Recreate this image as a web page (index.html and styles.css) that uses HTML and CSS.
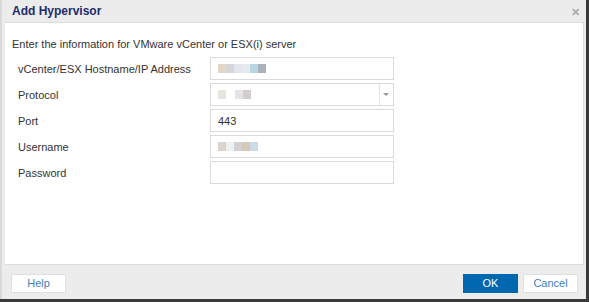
FILE: index.html
```html
<!DOCTYPE html>
<html lang="en">
<head>
    <meta charset="UTF-8">
    <meta name="viewport" content="width=device-width, initial-scale=1.0">
    <link rel="stylesheet" href="styles.css">
</head>
<body>
<div class="dialog">
    <div class="titleBar">
        <h3>Add Hypervisor</h3>
        <span class="close">&#x2715;</span>
    </div>
    <div class="content">
        <p class="intro">Enter the information for VMware vCenter or ESX(i) server</p>
        <div class="form">
            <div class="row">
                <label>vCenter/ESX Hostname/IP Address</label>
                <div class="field">
                    <span class="blur" style="background:#e3d6c6"></span><span class="blur" style="background:#d6d6d8"></span><span class="blur" style="background:#e2e6ec"></span><span class="blur" style="background:#e6eaef"></span><span class="blur" style="background:#b9d5e4"></span><span class="blur" style="background:#acb2b9"></span>
                </div>
            </div>
            <div class="row">
                <label>Protocol</label>
                <div class="field select">
                    <span class="blur" style="background:#e8e5df"></span><span class="gap"></span><span class="blur" style="background:#e4e4e8"></span><span class="blur" style="background:#d2cece"></span>
                    <span class="arrow"></span>
                </div>
            </div>
            <div class="row">
                <label>Port</label>
                <div class="field">443</div>
            </div>
            <div class="row">
                <label>Username</label>
                <div class="field">
                    <span class="blur" style="background:#ddd3ca"></span><span class="blur" style="background:#eff0f2"></span><span class="blur" style="background:#d1d1d3"></span><span class="blur" style="background:#d4c8bb"></span><span class="blur" style="background:#cddbe6"></span>
                </div>
            </div>
            <div class="row">
                <label>Password</label>
                <div class="field"></div>
            </div>
        </div>
    </div>
    <div class="footer">
        <button class="btn">Help</button>
        <div class="actions">
            <button class="btn primary">OK</button>
            <button class="btn">Cancel</button>
        </div>
    </div>
</div>
</body>
</html>
```

FILE: styles.css
```css
body {
	margin: 0;
	background-color: #3a3a3a;
	font-family: "Liberation Sans", Arial, sans-serif;
}

.dialog {
	width: 586px;
	height: 299px;
	background-color: #ececec;
	border-left: 2px solid #d9d9d9;
	box-sizing: border-box;
	display: flex;
	flex-direction: column;
}

.titleBar {
	height: 22px;
	display: flex;
	align-items: center;
	justify-content: space-between;
	padding: 0 6px 0 10px;
}

.titleBar h3 {
	margin: 0;
	font-size: 12px;
	font-weight: bold;
	color: #1d2d6b;
}

.close {
	font-size: 11px;
	font-weight: bold;
	color: #a9a9a9;
	margin-top: 3px;
}

.content {
	height: 243px;
	margin: 0 2px 0 3px;
	background-color: #fff;
	border: 1px solid #dcdce4;
	border-left: none;
	box-sizing: border-box;
	padding: 15px 0 0 7px;
}

.intro {
	margin: 0 0 7px;
	font-size: 11px;
	color: #333;
}

.form {
	display: flex;
	flex-direction: column;
	gap: 3px;
}

.row {
	display: flex;
	align-items: center;
	height: 23px;
}

.row label {
	width: 192px;
	padding-left: 6px;
	font-size: 11px;
	color: #333;
}

.field {
	width: 184px;
	height: 23px;
	border: 1px solid #dadada;
	box-sizing: border-box;
	display: flex;
	align-items: center;
	padding-left: 7px;
	font-size: 11px;
	color: #333;
	position: relative;
}

.blur {
	display: inline-block;
	width: 8px;
	height: 9px;
}

.gap {
	display: inline-block;
	width: 9px;
}

.select .arrow {
	position: absolute;
	right: 0;
	top: 0;
	bottom: 0;
	width: 13px;
	border-left: 1px solid #e2e2e2;
}

.select .arrow::after {
	content: "";
	position: absolute;
	left: 3px;
	top: 9px;
	border-left: 3px solid transparent;
	border-right: 3px solid transparent;
	border-top: 3px solid #999;
}

.footer {
	flex: 1;
	display: flex;
	align-items: center;
	justify-content: space-between;
	padding: 0 8px 0 9px;
}

.actions {
	display: flex;
	gap: 5px;
}

.btn {
	width: 55px;
	height: 19px;
	border: 1px solid #e0e0e0;
	background-color: #fff;
	color: #3e7fc1;
	font-family: "Liberation Sans", Arial, sans-serif;
	font-size: 11px;
	padding: 0;
	margin-top: 2px;
}

.btn.primary {
	background-color: #0068b1;
	border-color: #0068b1;
	color: #fff;
}
```
